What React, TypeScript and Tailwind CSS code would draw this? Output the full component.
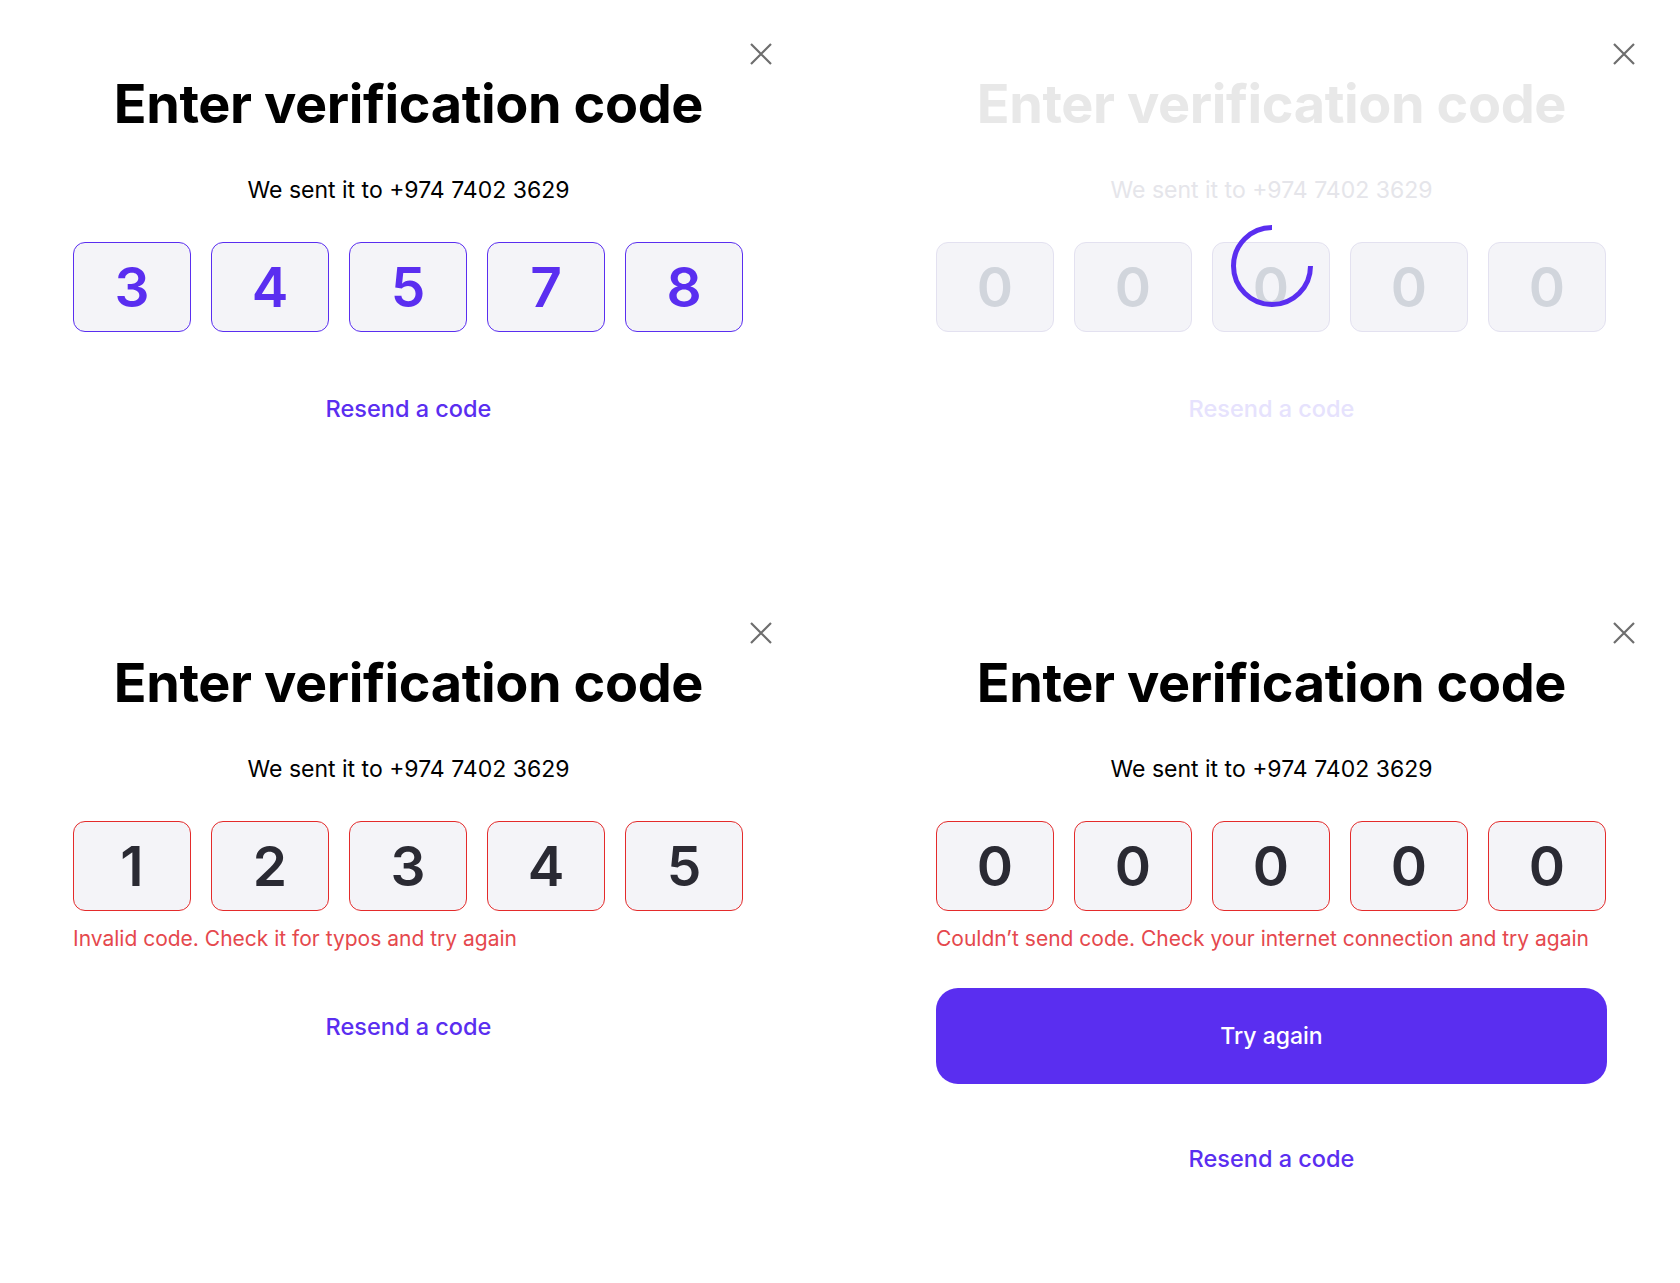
import React from "react";

type Variant = "success" | "loading" | "invalid" | "network";

const FONT = { fontFamily: "Inter, 'Noto Sans', sans-serif" };

function CloseIcon() {
  return (
    <svg width="22" height="22" viewBox="0 0 22 22" fill="none">
      <path d="M1 1L21 21M21 1L1 21" stroke="#6e6e6e" strokeWidth="2.2" />
    </svg>
  );
}

function Spinner() {
  return (
    <svg width="84" height="84" viewBox="0 0 84 84" fill="none">
      <path
        d="M42 3.5A38.5 38.5 0 1 0 80.5 42"
        stroke="#5a2ef0"
        strokeWidth="5"
      />
    </svg>
  );
}

function DigitBox({
  digit,
  variant,
  spinner,
}: {
  digit: string;
  variant: Variant;
  spinner?: boolean;
}) {
  let cls =
    "relative w-[118px] h-[90px] rounded-[12px] bg-[#f4f4f8] flex items-center justify-center text-[55px] font-semibold leading-none ";
  if (variant === "success") cls += "border-[1.8px] border-[#5a2ef0] text-[#5a2ef0]";
  else if (variant === "loading") cls += "border-[1.8px] border-[#e3e1f0] text-[#d1d5dc]";
  else cls += "border-[1.8px] border-[#e42b2b] text-[#2a2a33]";
  return (
    <div className={cls}>
      <span className="pt-[1px]">{digit}</span>
      {spinner && (
        <div className="absolute top-[-19px] left-[17px]">
          <Spinner />
        </div>
      )}
    </div>
  );
}

function Panel({ variant, digits }: { variant: Variant; digits: string[] }) {
  const loading = variant === "loading";
  return (
    <div className="flex flex-col w-[671px]" style={FONT}>
      <div className="flex justify-end mr-[-28px] mt-[43px] h-[22px]">
        <CloseIcon />
      </div>
      <h1
        className={
          "mt-[12px] text-center text-[54px] leading-[54px] font-bold tracking-[-0.4px] " +
          (loading ? "text-[#e8e8e8]" : "text-black")
        }
      >
        Enter verification code
      </h1>
      <p
        className={
          "mt-[45px] text-center text-[23px] leading-[28px] " +
          (loading ? "text-[#e5e5ea]" : "text-black")
        }
      >
        We sent it to +974 7402 3629
      </p>
      <div className="mt-[38px] flex gap-[20px]">
        {digits.map((d, i) => (
          <DigitBox
            key={i}
            digit={d}
            variant={variant}
            spinner={loading && i === 2}
          />
        ))}
      </div>
      {variant === "invalid" && (
        <p className="mt-[14px] text-[21px] leading-[28px] text-[#e5484d]">
          Invalid code. Check it for typos and try again
        </p>
      )}
      {variant === "network" && (
        <>
          <p className="mt-[14px] text-[21px] leading-[28px] text-[#e5484d]">
            Couldn’t send code. Check your internet connection and try again
          </p>
          <button className="mt-[35px] h-[96px] w-full rounded-[22px] bg-[#5a2ef0] text-white text-[23px] font-medium">
            Try again
          </button>
        </>
      )}
      <div
        className={
          "text-center text-[23.5px] leading-[32px] font-medium " +
          (variant === "network"
            ? "mt-[59px]"
            : variant === "invalid"
            ? "mt-[58px]"
            : "mt-[61px]") +
          " " +
          (loading ? "text-[#e6e2fd]" : "text-[#5a2ef0]")
        }
      >
        Resend a code
      </div>
    </div>
  );
}

export default function App() {
  return (
    <div className="w-[1680px] h-[1283px] bg-white grid grid-cols-[671px_671px] grid-rows-[579px_704px] gap-x-[192px] px-[73px] overflow-hidden">
      <Panel variant="success" digits={["3", "4", "5", "7", "8"]} />
      <Panel variant="loading" digits={["0", "0", "0", "0", "0"]} />
      <Panel variant="invalid" digits={["1", "2", "3", "4", "5"]} />
      <Panel variant="network" digits={["0", "0", "0", "0", "0"]} />
    </div>
  );
}
